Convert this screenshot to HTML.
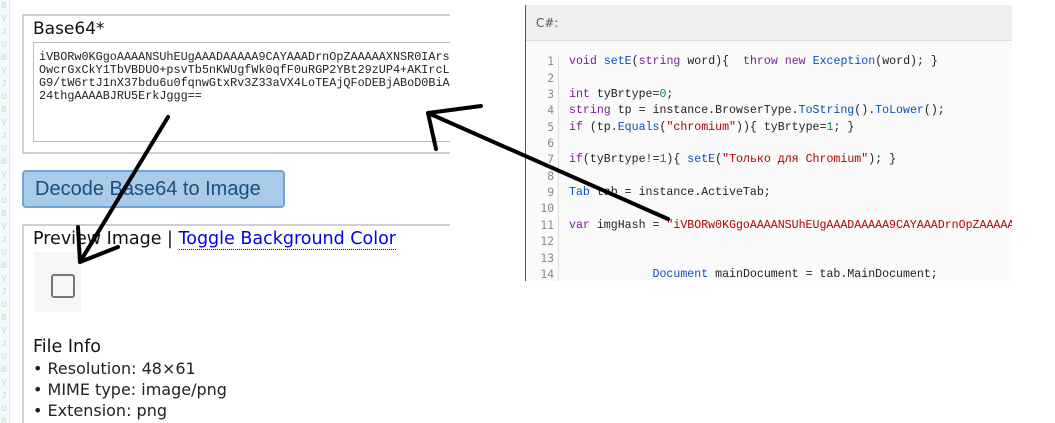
<!DOCTYPE html>
<html><head><meta charset="utf-8"><style>
*{margin:0;padding:0;box-sizing:border-box}
body{width:1055px;height:423px;overflow:hidden;background:#fff;position:relative;font-family:"DejaVu Sans","Liberation Sans",sans-serif}
.strip{position:absolute;left:0;top:0;width:10px;height:423px;background:#f4f8ff;border-right:1px solid #dde6f5;font:9px "Liberation Mono",monospace;color:#bfe3c3;line-height:13px;overflow:hidden;padding-left:1px}
.lp{position:absolute;left:0;top:0;width:450px;height:423px;overflow:hidden}
.box1{position:absolute;left:22px;top:14px;width:460px;height:140px;border:2px solid #d0d0d0}
.lbl{position:absolute;left:33px;top:19px;font-size:17px;color:#111}
.ta{position:absolute;left:33px;top:42px;width:460px;height:100px;border:1px solid #bbb;background:#fff;font:11.8px "Liberation Mono","DejaVu Sans Mono",monospace;line-height:13px;padding:8px 0 0 5px;white-space:pre;overflow:hidden;color:#222}
.btn{position:absolute;left:22px;top:170px;width:263px;height:38px;background:#a9cbe8;border:2px solid #6fa6d8;border-radius:4px;color:#1e4d7a;font:20px "Liberation Sans",sans-serif;padding:6px 0 0 11px}
.box2{position:absolute;left:22px;top:224px;width:460px;height:210px;border:2px solid #d0d0d0}
.pv{position:absolute;left:33px;top:229px;font-size:17.5px;color:#111}
.pv a{color:#0000ee;text-decoration:none;border-bottom:1px dotted #0000ee}
.img{position:absolute;left:34px;top:252px;width:47px;height:60px;background:#f6f6f6}
.img i{position:absolute;left:17px;top:22px;width:24px;height:24px;border:2px solid #777;border-radius:3px}
.fi{position:absolute;left:33px;top:337px;font-size:17.5px;color:#111}
.li{position:absolute;left:33px;font-size:16px;color:#222}
.code{position:absolute;left:525px;top:5px;width:487px;height:276px;border-left:1px solid #555;background:#fafafa;overflow:hidden}
.hd{height:36px;background:#f0f0f0;border-bottom:1px solid #ddd;font:12px "DejaVu Sans",sans-serif;color:#555;padding:11px 0 0 10px}
.gut{position:absolute;left:32px;top:52px;width:1px;height:230px;background:#ddd}
.ln{position:absolute;left:0;width:28px;text-align:right;font:11.3px "DejaVu Sans Mono",monospace;color:#888}
.cl{position:absolute;left:43px;font:11.6px "Liberation Mono","DejaVu Sans Mono",monospace;white-space:pre;color:#222}
.k{color:#7a1f93}.f{color:#0b4fbf}.s{color:#b20000}.n{color:#098658}
</style></head><body>
<div class="strip">B<br>V<br>J<br>U<br>B<br>V<br>J<br>U<br>B<br>V<br>J<br>U<br>B<br>V<br>J<br>U<br>B<br>V<br>J<br>U<br>B<br>V<br>J<br>U<br>B<br>V<br>J<br>U<br>B<br>V<br>J<br>U<br>B<br>V</div>
<div class="lp">
<div class="box1"></div>
<div class="lbl">Base64*</div>
<div class="ta">iVBORw0KGgoAAAANSUhEUgAAADAAAAA9CAYAAADrnOpZAAAAAXNSR0IArs4c
OwcrGxCkY1TbVBDUO+psvTb5nKWUgfWk0qfF0uRGP2YBt29zUP4+AKIrcLbx
G9/tW6rtJ1nX37bdu6u0fqnwGtxRv3Z33aVX4LoTEAjQFoDEBjABoD0BiAx
24thgAAAABJRU5ErkJggg==</div>
<div class="btn">Decode Base64 to Image</div>
<div class="box2"></div>
<div class="pv">Preview Image | <a>Toggle Background Color</a></div>
<div class="img"><i></i></div>
<div class="fi">File Info</div>
<div class="li" style="top:359px">• Resolution: 48×61</div>
<div class="li" style="top:380px">• MIME type: image/png</div>
<div class="li" style="top:401px">• Extension: png</div>
</div>
<div class="code">
<div class="hd">C#:</div>
<div class="gut"></div>
<div class="ln" style="top:50px">1</div><div class="cl" style="top:50px"><span class="k">void</span> <span class="f">setE</span>(<span class="k">string</span> word){  <span class="k">throw</span> <span class="k">new</span> <span class="f">Exception</span>(word); }</div>
<div class="ln" style="top:67px">2</div>
<div class="ln" style="top:83px">3</div><div class="cl" style="top:83px"><span class="k">int</span> tyBrtype=<span class="n">0</span>;</div>
<div class="ln" style="top:99px">4</div><div class="cl" style="top:99px"><span class="k">string</span> tp = instance.BrowserType.<span class="f">ToString</span>().<span class="f">ToLower</span>();</div>
<div class="ln" style="top:116px">5</div><div class="cl" style="top:116px"><span class="k">if</span> (tp.<span class="f">Equals</span>(<span class="s">"chromium"</span>)){ tyBrtype=<span class="n">1</span>; }</div>
<div class="ln" style="top:132px">6</div>
<div class="ln" style="top:148px">7</div><div class="cl" style="top:148px"><span class="k">if</span>(tyBrtype!=<span class="n">1</span>){ <span class="f">setE</span>(<span class="s">"Только для Chromium"</span>); }</div>
<div class="ln" style="top:165px">8</div>
<div class="ln" style="top:181px">9</div><div class="cl" style="top:181px"><span class="f">Tab</span> tab = instance.ActiveTab;</div>
<div class="ln" style="top:197px">10</div>
<div class="ln" style="top:214px">11</div><div class="cl" style="top:214px"><span class="k">var</span> imgHash = <span class="s">"iVBORw0KGgoAAAANSUhEUgAAADAAAAA9CAYAAADrnOpZAAAAAXNSR0I</span></div>
<div class="ln" style="top:230px">12</div>
<div class="ln" style="top:247px">13</div>
<div class="ln" style="top:263px">14</div><div class="cl" style="top:263px">            <span class="f">Document</span> mainDocument = tab.MainDocument;</div>
</div>
<svg style="position:absolute;left:0;top:0" width="1055" height="423">
<g stroke="#000" stroke-width="4" fill="none" stroke-linecap="round">
<path d="M168 117 L80 262 M80 262 L78 227 M80 262 L118 247"/>
<path d="M668 219 L428 113 M428 113 L481 106 M428 113 L436 149"/>
</g></svg>
</body></html>
